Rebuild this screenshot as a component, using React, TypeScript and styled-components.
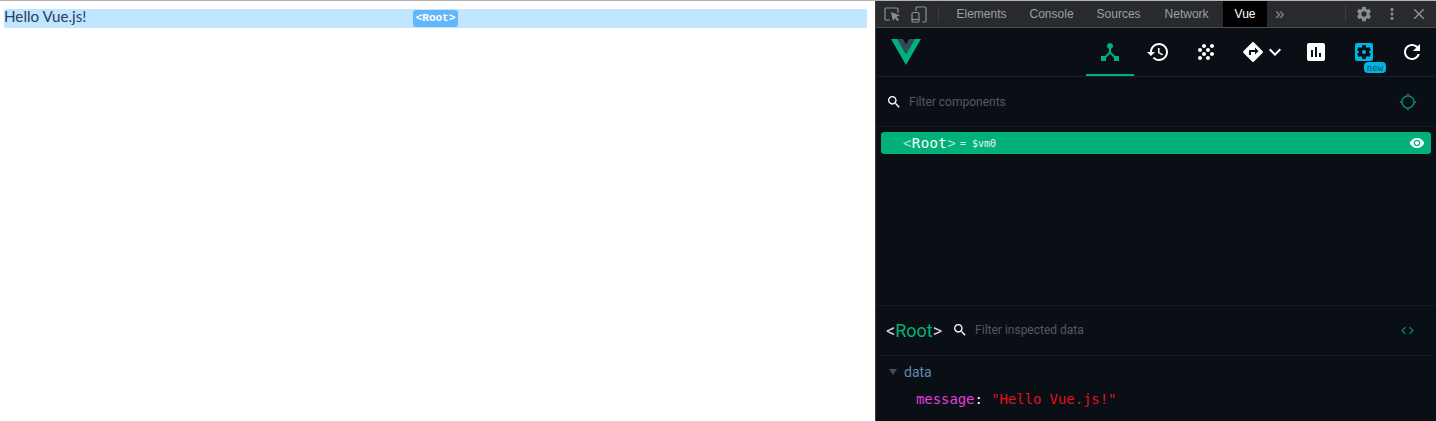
import styled, { createGlobalStyle } from "styled-components";

const ICONS = {
  hub: "M17 16l-4-4V8.82C14.16 8.4 15 7.3 15 6c0-1.66-1.34-3-3-3S9 4.34 9 6c0 1.3.84 2.4 2 2.82V12l-4 4H3v5h5v-3.05l4-4.2 4 4.2V21h5v-5h-4z",
  history:
    "M13 3c-4.97 0-9 4.03-9 9H1l3.89 3.89.07.14L9 12H6c0-3.87 3.13-7 7-7s7 3.13 7 7-3.13 7-7 7c-1.93 0-3.68-.79-4.94-2.06l-1.42 1.42C8.27 19.99 10.51 21 13 21c4.97 0 9-4.03 9-9s-4.03-9-9-9zm-1 5v5l4.28 2.54.72-1.21-3.5-2.08V8H12z",
  grain:
    "M10 12c-1.1 0-2 .9-2 2s.9 2 2 2 2-.9 2-2-.9-2-2-2zM6 8c-1.1 0-2 .9-2 2s.9 2 2 2 2-.9 2-2-.9-2-2-2zm0 8c-1.1 0-2 .9-2 2s.9 2 2 2 2-.9 2-2-.9-2-2-2zm12-8c1.1 0 2-.9 2-2s-.9-2-2-2-2 .9-2 2 .9 2 2 2zm-4 8c-1.1 0-2 .9-2 2s.9 2 2 2 2-.9 2-2-.9-2-2-2zm4-4c-1.1 0-2 .9-2 2s.9 2 2 2 2-.9 2-2-.9-2-2-2zm-4-4c-1.1 0-2 .9-2 2s.9 2 2 2 2-.9 2-2-.9-2-2-2zm-4-4c-1.1 0-2 .9-2 2s.9 2 2 2 2-.9 2-2-.9-2-2-2z",
  directions:
    "M21.71 11.29l-9-9c-.39-.39-1.02-.39-1.41 0l-9 9c-.39.39-.39 1.02 0 1.41l9 9c.39.39 1.02.39 1.41 0l9-9c.39-.38.39-1.01 0-1.41zM14 14.5V12h-4v3H8v-4c0-.55.45-1 1-1h5V7.5l3.5 3.5-3.5 3.5z",
  chevron: "M7.41 8.59L12 13.17l4.59-4.58L18 10l-6 6-6-6 1.41-1.41z",
  assessment:
    "M19 3H5c-1.1 0-2 .9-2 2v14c0 1.1.9 2 2 2h14c1.1 0 2-.9 2-2V5c0-1.1-.9-2-2-2zM9 17H7v-7h2v7zm4 0h-2V7h2v10zm4 0h-2v-4h2v4z",
  settingsBox:
    "M12 10c-1.1 0-2 .9-2 2s.9 2 2 2 2-.9 2-2-.9-2-2-2zm7-7H5c-1.11 0-2 .9-2 2v14c0 1.1.89 2 2 2h14c1.11 0 2-.9 2-2V5c0-1.1-.89-2-2-2zm-1.75 9c0 .23-.02.46-.05.68l1.48 1.16c.13.11.17.3.08.45l-1.4 2.42c-.09.15-.27.21-.43.15l-1.74-.7c-.36.28-.76.51-1.18.69l-.26 1.85c-.03.17-.18.3-.35.3h-2.8c-.17 0-.32-.13-.35-.29l-.26-1.85c-.43-.18-.82-.41-1.18-.69l-1.74.7c-.16.06-.34 0-.43-.15l-1.4-2.42c-.09-.15-.05-.34.08-.45l1.48-1.16c-.03-.23-.05-.46-.05-.69 0-.23.02-.46.05-.68l-1.48-1.16c-.13-.11-.17-.3-.08-.45l1.4-2.42c.09-.15.27-.21.43-.15l1.74.7c.36-.28.76-.51 1.18-.69l.26-1.85c.03-.17.18-.3.35-.3h2.8c.17 0 .32.13.35.29l.26 1.85c.43.18.82.41 1.18.69l1.74-.7c.16-.06.34 0 .43.15l1.4 2.42c.09.15.05.34-.08.45l-1.48 1.16c.03.23.05.46.05.69z",
  refresh:
    "M17.65 6.35C16.2 4.9 14.21 4 12 4c-4.42 0-7.99 3.58-7.99 8s3.57 8 7.99 8c3.73 0 6.84-2.55 7.73-6h-2.08c-.82 2.33-3.04 4-5.65 4-3.31 0-6-2.69-6-6s2.69-6 6-6c1.66 0 3.14.69 4.22 1.78L13 11h7V4l-2.35 2.35z",
  search:
    "M15.5 14h-.79l-.28-.27C15.41 12.59 16 11.11 16 9.5 16 5.91 13.09 3 9.5 3S3 5.91 3 9.5 5.91 16 9.5 16c1.61 0 3.09-.59 4.23-1.57l.27.28v.79l5 4.99L20.49 19l-4.99-5zm-6 0C7.01 14 5 11.99 5 9.5S7.01 5 9.5 5 14 7.01 14 9.5 11.99 14 9.5 14z",
  target:
    "M20.94 11c-.46-4.17-3.77-7.48-7.94-7.94V1h-2v2.06C6.83 3.52 3.52 6.83 3.06 11H1v2h2.06c.46 4.17 3.77 7.48 7.94 7.94V23h2v-2.06c4.17-.46 7.48-3.77 7.94-7.94H23v-2h-2.06zM12 19c-3.87 0-7-3.13-7-7s3.13-7 7-7 7 3.13 7 7-3.13 7-7 7z",
  eye: "M12 4.5C7 4.5 2.73 7.61 1 12c1.73 4.39 6 7.5 11 7.5s9.27-3.11 11-7.5c-1.73-4.39-6-7.5-11-7.5zM12 17c-2.76 0-5-2.24-5-5s2.24-5 5-5 5 2.24 5 5-2.24 5-5 5zm0-8c-1.66 0-3 1.34-3 3s1.34 3 3 3 3-1.34 3-3-1.34-3-3-3z",
  code: "M9.4 16.6L4.8 12l4.6-4.6L8 6l-6 6 6 6 1.4-1.4zm5.2 0l4.6-4.6-4.6-4.6L16 6l6 6-6 6-1.4-1.4z",
  gear: "M19.14 12.94c.04-.3.06-.61.06-.94 0-.32-.02-.64-.07-.94l2.03-1.58c.18-.14.23-.41.12-.61l-1.92-3.32c-.12-.22-.37-.29-.59-.22l-2.39.96c-.5-.38-1.03-.7-1.62-.94l-.36-2.54c-.04-.24-.24-.41-.48-.41h-3.84c-.24 0-.43.17-.47.41l-.36 2.54c-.59.24-1.13.57-1.62.94l-2.39-.96c-.22-.08-.47 0-.59.22L2.74 8.87c-.12.21-.08.47.12.61l2.03 1.58c-.05.3-.09.63-.09.94s.02.64.07.94l-2.03 1.58c-.18.14-.23.41-.12.61l1.92 3.32c.12.22.37.29.59.22l2.39-.96c.5.38 1.03.7 1.62.94l.36 2.54c.05.24.24.41.48.41h3.84c.24 0 .44-.17.47-.41l.36-2.54c.59-.24 1.13-.56 1.62-.94l2.39.96c.22.08.47 0 .59-.22l1.92-3.32c.12-.22.07-.47-.12-.61l-2.01-1.58zM12 15.6c-1.98 0-3.6-1.62-3.6-3.6s1.62-3.6 3.6-3.6 3.6 1.62 3.6 3.6-1.62 3.6-3.6 3.6z",
  dots: "M12 8c1.1 0 2-.9 2-2s-.9-2-2-2-2 .9-2 2 .9 2 2 2zm0 2c-1.1 0-2 .9-2 2s.9 2 2 2 2-.9 2-2-.9-2-2-2zm0 6c-1.1 0-2 .9-2 2s.9 2 2 2 2-.9 2-2-.9-2-2-2z",
  close:
    "M19 6.41L17.59 5 12 10.59 6.41 5 5 6.41 10.59 12 5 17.59 6.41 19 12 13.41 17.59 19 19 17.59 13.41 12z",
};

const GlobalStyle = createGlobalStyle`
  html, body {
    margin: 0;
    padding: 0;
    overflow: hidden;
    background: #fff;
  }
`;

const Svg = styled.svg<{ $size: number; $color: string }>`
  width: ${(p) => p.$size}px;
  height: ${(p) => p.$size}px;
  fill: ${(p) => p.$color};
  flex: none;
  display: block;
`;

function Icon({
  name,
  size = 24,
  color = "#fff",
}: {
  name: keyof typeof ICONS;
  size?: number;
  color?: string;
}) {
  return (
    <Svg viewBox="0 0 24 24" $size={size} $color={color}>
      <path d={ICONS[name]} />
    </Svg>
  );
}

const Screen = styled.div`
  display: flex;
  width: 1436px;
  height: 421px;
  overflow: hidden;
  border-top: 1px solid #b4b4b4;
  box-sizing: border-box;
`;

const Page = styled.div`
  width: 875px;
  flex: none;
  background: #fff;
  padding: 8px 8px 0 4px;
  box-sizing: border-box;
`;

const Highlight = styled.div`
  position: relative;
  height: 19px;
  background: #c1e4ff;
  border-radius: 2px;
  font: 15.2px/15px Lato, "Noto Sans", sans-serif;
  color: #24425e;
`;

const OverlayTag = styled.span`
  position: absolute;
  top: 1px;
  left: 409px;
  width: 45px;
  height: 17px;
  box-sizing: border-box;
  border-radius: 3px;
  background: #62b6fb;
  color: #fff;
  font: bold 11px/16px "Liberation Mono", monospace;
  text-align: center;
`;

const Devtools = styled.div`
  flex: 1;
  min-width: 0;
  display: flex;
  flex-direction: column;
  border-left: 1px solid #3d3d3d;
  background: #0a0f15;
`;

const TabBar = styled.div`
  height: 26px;
  display: flex;
  align-items: center;
  background: #292a2d;
  border-bottom: 1px solid #4a4c50;
  font: 12px "Liberation Sans", Arial, sans-serif;
  color: #9aa0a6;
  padding-left: 8px;
`;

const ToolIcons = styled.div`
  display: flex;
  align-items: center;
  gap: 10px;
  margin-right: 11px;
`;

const Separator = styled.div`
  width: 1px;
  height: 16px;
  background: #3d3d3d;
`;

const Tab = styled.div<{ $active?: boolean; $gap?: number }>`
  height: 100%;
  display: flex;
  align-items: center;
  padding: 0 11.5px;
  margin-left: ${(p) => p.$gap ?? 0}px;
  background: ${(p) => (p.$active ? "#000" : "transparent")};
  color: ${(p) => (p.$active ? "#fff" : "#9aa0a6")};
`;

const TabList = styled.div`
  height: 100%;
  display: flex;
  align-items: center;
  margin-left: 6px;
`;

const More = styled.span`
  margin-left: 8px;
  font-size: 17px;
  line-height: 15px;
  color: #8a8f94;
  transform: translateY(-1px);
`;

const BarEnd = styled.div`
  margin-left: auto;
  display: flex;
  align-items: center;
  padding-right: 3px;

  ${Separator} {
    margin-right: 5px;
  }
`;

const BarButton = styled.div`
  width: 27.5px;
  display: flex;
  justify-content: center;
`;

const Header = styled.div`
  height: 48px;
  display: flex;
  align-items: stretch;
  justify-content: space-between;
  border-bottom: 1px solid #1b2129;
  flex: none;
`;

const LogoWrap = styled.div`
  padding: 11px 0 0 15px;
`;

const NavGroup = styled.div`
  display: flex;
`;

const NavItem = styled.div<{ $active?: boolean }>`
  position: relative;
  width: 48px;
  display: flex;
  align-items: center;
  justify-content: center;
  box-sizing: border-box;
  padding-top: 2px;
  border-bottom: 2px solid ${(p) => (p.$active ? "#00b27a" : "transparent")};
`;

const RoutesItem = styled(NavItem)`
  width: 62px;
  justify-content: flex-start;
  padding-left: 11px;
`;

const Arrow = styled.div`
  margin-left: -2px;
`;

const NewBadge = styled.span`
  position: absolute;
  left: 24px;
  top: 34px;
  width: 22px;
  height: 11px;
  border-radius: 4px;
  background: #00b4e4;
  color: #0a4a5e;
  font: 9px/12px "DejaVu Sans Mono", monospace;
  text-align: center;
`;

const FilterRow = styled.div`
  height: 49px;
  flex: none;
  display: flex;
  align-items: center;
  padding: 0 19px 0 10px;
  border-bottom: 1px solid #141a21;
`;

const FilterLabel = styled.span`
  margin-left: 7px;
  font: 12px Roboto, "Liberation Sans", sans-serif;
  color: #55595e;
`;

const EndIcon = styled.div`
  margin-left: auto;
`;

const CodeIcon = styled(EndIcon)`
  margin-right: 2.5px;
`;

const Tree = styled.div`
  height: 179px;
  flex: none;
  padding: 5px 5px 0;
  box-sizing: border-box;
  border-bottom: 1px solid #141a21;
`;

const TreeRow = styled.div`
  height: 22px;
  display: flex;
  align-items: center;
  padding: 0 6px 0 22px;
  background: #00b27a;
  border-radius: 3px;
  color: #fff;
  font-family: "DejaVu Sans Mono", monospace;
`;

const TreeName = styled.span`
  font-size: 14px;
  letter-spacing: 0.4px;
`;

const Bracket = styled.span`
  opacity: 0.65;
`;

const TreeRef = styled.span`
  font-size: 10px;
  margin-left: 4px;
  opacity: 0.9;
`;

const InspectHeader = styled.div`
  height: 48px;
  flex: none;
  display: flex;
  align-items: center;
  padding: 0 19px 1px 10px;
  border-bottom: 1px solid #141a21;
`;

const InspectName = styled.span`
  font: 18px Roboto, "Liberation Sans", sans-serif;
  color: #00b27a;
  margin-right: 10px;
`;

const InspectBracket = styled.span`
  color: #d0d3d6;
`;

const DataSection = styled.div`
  padding: 8px 0 0 13px;
`;

const SectionRow = styled.div`
  height: 16px;
  display: flex;
  align-items: center;
`;

const Caret = styled.span`
  width: 0;
  height: 0;
  border-left: 4px solid transparent;
  border-right: 4px solid transparent;
  border-top: 6px solid #454b50;
  margin-right: 7px;
`;

const SectionName = styled.span`
  font: 14px Roboto, "Liberation Sans", sans-serif;
  color: #6089b0;
`;

const Prop = styled.div`
  margin: 11px 0 0 27px;
  font: 14px/16px "DejaVu Sans Mono", monospace;
  letter-spacing: -0.08px;
  color: #fff;
  white-space: pre;
`;

const Key = styled.span`
  color: #e23cdd;
`;

const Str = styled.span`
  color: #e3101f;
`;

export default function App() {
  return (
    <>
      <GlobalStyle />
      <Screen>
        <Page>
          <Highlight>
            Hello Vue.js!
            <OverlayTag>&lt;Root&gt;</OverlayTag>
          </Highlight>
        </Page>
        <Devtools>
          <TabBar>
            <ToolIcons>
              <svg width="17" height="17" viewBox="0 0 17 17" fill="none">
                <path d="M6 14H2a1 1 0 0 1-1-1V3a1 1 0 0 1 1-1h11a1 1 0 0 1 1 1v4" stroke="#8a8f94" strokeWidth="1.2" />
                <path d="M7 6l9 3.5-3.6 1.2 2.6 3.3-1.5 1.2-2.6-3.3L9 15z" fill="#8a8f94" />
              </svg>
              <svg width="16" height="17" viewBox="0 0 16 17" fill="none" stroke="#8a8f94" strokeWidth="1.2">
                <path d="M5 5V2a1 1 0 0 1 1-1h8a1 1 0 0 1 1 1v13a1 1 0 0 1-1 1h-3" />
                <rect x="1" y="6.5" width="7" height="9.5" rx="1" />
                <path d="M1 13.5h7" />
              </svg>
            </ToolIcons>
            <Separator />
            <TabList>
              <Tab>Elements</Tab>
              <Tab>Console</Tab>
              <Tab>Sources</Tab>
              <Tab $gap={1}>Network</Tab>
              <Tab $active $gap={3}>
                Vue
              </Tab>
              <More>»</More>
            </TabList>
            <BarEnd>
              <Separator />
              <BarButton>
                <Icon name="gear" size={18} color="#8a8f94" />
              </BarButton>
              <BarButton>
                <Icon name="dots" size={18} color="#8a8f94" />
              </BarButton>
              <BarButton>
                <Icon name="close" size={18} color="#8a8f94" />
              </BarButton>
            </BarEnd>
          </TabBar>

          <Header>
            <LogoWrap>
              <svg width="30" height="26" viewBox="0 0 261.76 226.69">
                <path d="M161.096.001l-30.225 52.351L100.647.001H-.005l130.877 226.688L261.749.001z" fill="#00b27a" />
                <path d="M161.096.001l-30.225 52.351L100.647.001H52.346l78.526 136.01L209.398.001z" fill="#34495e" />
              </svg>
            </LogoWrap>
            <NavGroup>
              <NavItem $active>
                <Icon name="hub" color="#00b27a" />
              </NavItem>
              <NavItem>
                <Icon name="history" />
              </NavItem>
              <NavItem>
                <Icon name="grain" />
              </NavItem>
              <RoutesItem>
                <Icon name="directions" />
                <Arrow>
                  <Icon name="chevron" />
                </Arrow>
              </RoutesItem>
              <NavItem>
                <Icon name="assessment" />
              </NavItem>
              <NavItem>
                <Icon name="settingsBox" color="#00b4e4" />
                <NewBadge>new</NewBadge>
              </NavItem>
              <NavItem>
                <Icon name="refresh" />
              </NavItem>
            </NavGroup>
          </Header>

          <FilterRow>
            <Icon name="search" size={16} />
            <FilterLabel>Filter components</FilterLabel>
            <EndIcon>
              <Icon name="target" size={18} color="#078a62" />
            </EndIcon>
          </FilterRow>

          <Tree>
            <TreeRow>
              <TreeName>
                <Bracket>&lt;</Bracket>Root<Bracket>&gt;</Bracket>
              </TreeName>
              <TreeRef>= $vm0</TreeRef>
              <EndIcon>
                <Icon name="eye" size={16} />
              </EndIcon>
            </TreeRow>
          </Tree>

          <InspectHeader>
            <InspectName>
              <InspectBracket>&lt;</InspectBracket>Root<InspectBracket>&gt;</InspectBracket>
            </InspectName>
            <Icon name="search" size={16} />
            <FilterLabel>Filter inspected data</FilterLabel>
            <CodeIcon>
              <Icon name="code" size={15} color="#078a62" />
            </CodeIcon>
          </InspectHeader>

          <DataSection>
            <SectionRow>
              <Caret />
              <SectionName>data</SectionName>
            </SectionRow>
            <Prop>
              <Key>message</Key>: <Str>"Hello Vue.js!"</Str>
            </Prop>
          </DataSection>
        </Devtools>
      </Screen>
    </>
  );
}
